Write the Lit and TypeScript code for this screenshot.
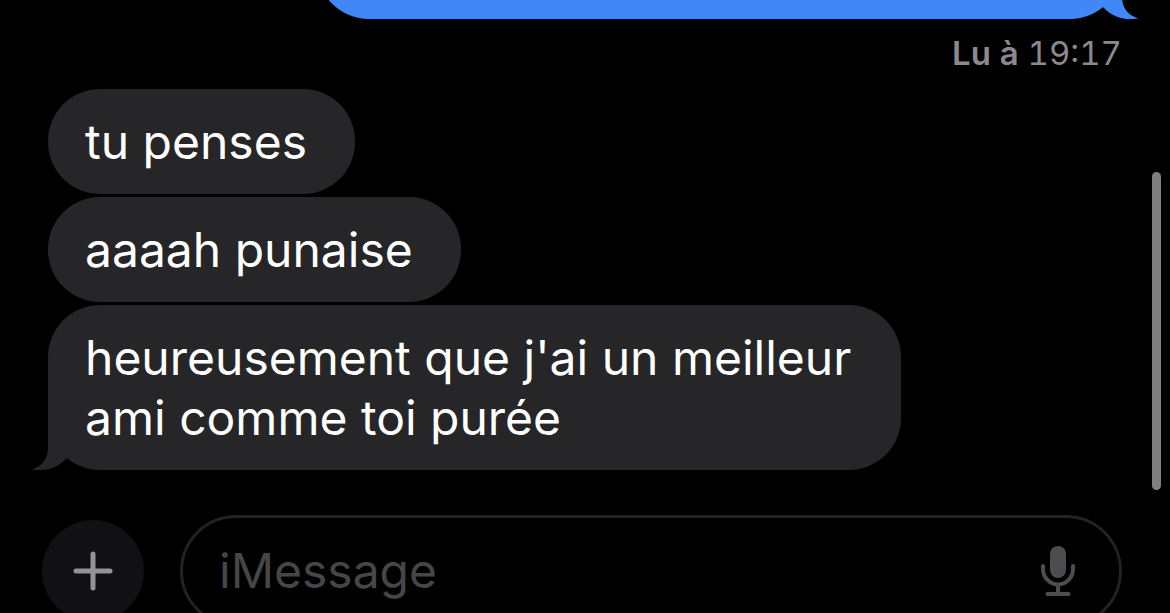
import { LitElement, html, css, svg } from "lit";
import { customElement, property } from "lit/decorators.js";

const tailShape = svg`<path d="M16 0V30C16 41 10 48 0 51.400C13 54 26 50 35 40L48 0Z" />`;

@customElement("chat-bubble")
class ChatBubble extends LitElement {
  @property({ type: Boolean }) tail = false;
  @property({ type: Boolean, reflect: true }) sent = false;

  static styles = css`
    :host {
      display: block;
      position: relative;
      box-sizing: border-box;
      max-width: 853px;
      padding: 23px 48px 22px 37px;
      border-radius: 52px;
      background: #262628;
      color: #fff;
      font-size: 48px;
      line-height: 60px;
    }
    :host([sent]) {
      width: 75%;
      height: 105px;
      background: #4187f7;
    }
    .tail {
      position: absolute;
      left: -16px;
      bottom: 0;
      width: 48px;
      height: 52px;
      fill: #262628;
    }
    :host([sent]) .tail {
      left: auto;
      right: -16px;
      fill: #4187f7;
      transform: scaleX(-1);
    }
  `;

  render() {
    return html`<slot></slot>${this.tail
        ? html`<svg class="tail" viewBox="0 0 48 52" aria-hidden="true">${tailShape}</svg>`
        : ""}`;
  }
}

@customElement("app-root")
class AppRoot extends LitElement {
  static styles = css`
    :host {
      display: flex;
      flex-direction: column;
      position: relative;
      box-sizing: border-box;
      height: 100vh;
      overflow: hidden;
      background: #000;
      font-family: Inter, "Liberation Sans", sans-serif;
    }
    .outgoing {
      display: flex;
      flex: none;
      align-items: flex-end;
      justify-content: flex-end;
      height: 19px;
      padding: 0 48px;
    }
    .receipt {
      padding: 14px 48px 16px;
      color: #8a8a8e;
      font-size: 33px;
      line-height: 40px;
      font-variant-numeric: tabular-nums;
      text-align: right;
    }
    .receipt b {
      font-weight: 600;
    }
    .incoming {
      display: flex;
      flex-direction: column;
      align-items: flex-start;
      gap: 3px;
      padding: 0 48px;
    }
    .composer {
      display: flex;
      flex: none;
      align-items: center;
      gap: 36px;
      padding: 45px 48px 0 42px;
    }
    button {
      display: flex;
      flex: none;
      align-items: center;
      justify-content: center;
      padding: 0;
      border: 0;
      background: none;
    }
    .add {
      width: 102px;
      height: 102px;
      border-radius: 50%;
      background: #111113;
    }
    .field {
      display: flex;
      flex: 1;
      align-items: center;
      box-sizing: border-box;
      height: 112px;
      padding: 0 43px 0 36px;
      border: 3px solid #222224;
      border-radius: 56px;
    }
    input {
      flex: 1;
      min-width: 0;
      height: 60px;
      padding: 0;
      border: 0;
      outline: 0;
      background: none;
      color: #fff;
      font: 48px/60px Inter, "Liberation Sans", sans-serif;
    }
    input::placeholder {
      color: #464648;
      opacity: 1;
    }
    .scrollbar {
      position: absolute;
      top: 28%;
      right: 9px;
      width: 9px;
      height: 52%;
      border-radius: 5px;
      background: #7f7f7f;
    }
  `;

  messages = ["tu penses", "aaaah punaise", "heureusement que j'ai un meilleur ami comme toi purée"];

  render() {
    const last = this.messages.length - 1;
    return html`
      <div class="outgoing"><chat-bubble sent tail></chat-bubble></div>
      <div class="receipt"><b>Lu à</b> 19:17</div>
      <div class="incoming">
        ${this.messages.map((text, i) => html`<chat-bubble ?tail=${i === last}>${text}</chat-bubble>`)}
      </div>
      <div class="composer">
        <button class="add" type="button" aria-label="Ajouter">
          <svg width="40" height="40" viewBox="0 0 40 40" stroke="#939395" stroke-width="5" stroke-linecap="round">
            <path d="M20 3V37M3 20H37" />
          </svg>
        </button>
        <div class="field">
          <input type="text" aria-label="iMessage" placeholder="iMessage" />
          <button type="button" aria-label="Dicter">
            <svg width="36" height="50" viewBox="0 0 36 50" fill="none" stroke="#4d4d4f" stroke-width="4" stroke-linecap="round">
              <rect x="10" y="0" width="16" height="32" rx="8" fill="#4d4d4f" stroke="none" />
              <path d="M3 20V23A15 15.500 0 0 0 33 23V20M18 39V48M7.500 48H28.500" />
            </svg>
          </button>
        </div>
      </div>
      <div class="scrollbar"></div>
    `;
  }
}
